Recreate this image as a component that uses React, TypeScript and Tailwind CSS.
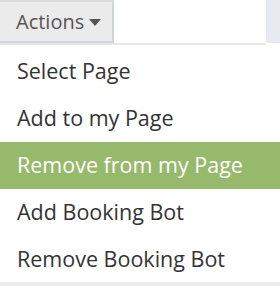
export default function App() {
  const items = ["Select Page", "Add to my Page", "Remove from my Page", "Add Booking Bot", "Remove Booking Bot"];
  return (
    <div className="w-[280px] h-[286px] bg-white overflow-hidden relative" style={{ fontFamily: '"Open Sans", sans-serif' }}>
      <div className="flex h-[43px]">
        <div className="w-[114px] h-[43px] bg-[#ebebeb] border-t-2 border-t-[#dcdcdc] border-r-2 border-b-2 border-r-[#cdd5e1] border-b-[#cdd5e1] flex items-center pl-[16px] text-[20px] text-[#555]">
          <span>Actions</span>
          <svg width="12" height="7" viewBox="0 0 12 7" className="ml-[5px] mt-[2px]"><path d="M0 0h12L6 7z" fill="#555" /></svg>
        </div>
        <div className="flex-1 bg-white" />
        <div className="w-[14px] bg-[#e7ebf0]" />
      </div>
      <div className="w-[266px] h-[2px] bg-[#e6e6e6]" />
      <div className="pt-[3px] flex flex-col">
        {items.map((t, i) => (
          <div key={t} className={`h-[47px] flex items-center pl-[17px] text-[21.5px] ${i === 2 ? "bg-[#97b96b] text-white" : "text-[#333]"}`}>{t}</div>
        ))}
      </div>
      <div className="absolute left-0 right-0 bottom-0 h-[4px] bg-[#ececec]" />
    </div>
  );
}
